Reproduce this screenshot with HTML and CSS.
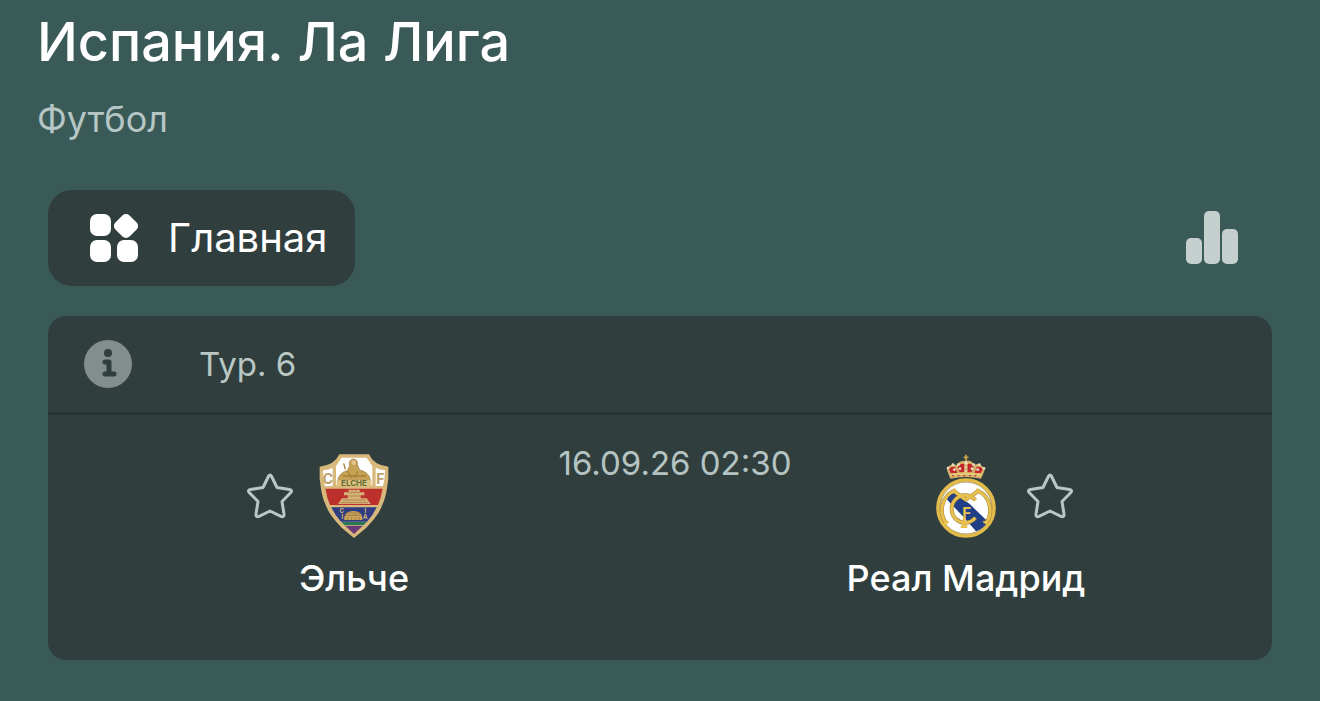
FILE: index.html
```html
<!DOCTYPE html>
<html lang="ru">
<head>
    <meta charset="UTF-8">
    <meta name="viewport" content="width=device-width, initial-scale=1.0">
    <title>Испания. Ла Лига</title>

    <link rel="stylesheet" href="styles.css">
</head>
<body>
    <header>
        <h1>Испания. Ла Лига</h1>
        <p class="sport">Футбол</p>
    </header>

    <nav>
        <button class="home-tab" type="button">
            <svg width="50" height="50" viewBox="0 0 50 50" fill="#fff" aria-hidden="true">
                <rect x="1" y="1" width="21" height="22" rx="7"/>
                <rect x="27" y="3" width="20" height="20" rx="5" transform="rotate(45 37 13)"/>
                <rect x="1" y="27" width="21" height="22" rx="7"/>
                <rect x="28" y="27" width="21" height="22" rx="7"/>
            </svg>
            Главная
        </button>
        <button class="stats" type="button" aria-label="Статистика">
            <svg width="52" height="54" viewBox="0 0 52 54" fill="#c4cfce">
                <rect x="0" y="27" width="16" height="26" rx="5"/>
                <rect x="18" y="0" width="16" height="53" rx="5"/>
                <rect x="36" y="18" width="16" height="35" rx="5"/>
            </svg>
        </button>
    </nav>

    <main class="card">
        <div class="round">
            <svg width="48" height="48" viewBox="0 0 48 48" aria-hidden="true">
                <circle cx="24" cy="24" r="24" fill="#828d8c"/>
                <circle cx="24" cy="13" r="4" fill="#303f3e"/>
                <path d="M21 22h4v12M21 34h9" fill="none" stroke="#303f3e" stroke-width="5" stroke-linecap="round" stroke-linejoin="round"/>
            </svg>
            <span>Тур. 6</span>
        </div>

        <div class="match">
            <section class="team home">
                <div class="badge-row">
                    <button class="star" type="button" aria-label="Добавить Эльче в избранное">
                        <svg width="48" height="48" viewBox="0 0 48 48">
                            <path d="M22.400 4.500Q24 1.500 25.600 4.500L31 15.500L43.500 17.500Q47 18.200 44.600 20.800L36 29.500L38 42Q38.200 45.600 35 44.300L24 39L13 44.300Q9.800 45.600 10 42L12 29.500L3.400 20.800Q1 18.200 4.500 17.500L17 15.500Z"/>
                        </svg>
                    </button>
                    <svg class="crest" width="70" height="84" viewBox="27 28 210 252" aria-hidden="true">
                        <path d="M88 29H177Q190 61 235 66V103C231 128 230 151 219 176C206 211 190 225 169 249L132 280L95 249C74 225 58 211 45 176C34 151 33 128 29 103V66Q74 61 88 29Z" fill="#d8b87b"/>
                        <path d="M94 39H170L187 65V122H78V65Z" fill="#fff"/>
                        <path d="M39 77Q58 75 68 69V124H45Q39 101 39 77ZM197 69Q209 75 225 77Q225 101 219 124H197Z" fill="#fff"/>
                        <path d="M46 132H218Q213 160 204 181H60Q51 160 46 132Z" fill="#be302c"/>
                        <path d="M64 188H200Q190 210 171 231H93Q74 210 64 188Z" fill="#303c82"/>
                        <path d="M94 232H170L160 242H104Z" fill="#297858"/>
                        <path d="M106 244H158L132 268Z" fill="#6c3877"/>
                        <!-- figure over the name -->
                        <path d="M84 105Q88 84 112 78L119 64Q114 45 130 43Q145 45 142 61L149 76Q176 82 181 105Z" fill="#c7a255" stroke="#987637" stroke-width="2"/>
                        <path d="M101 56L106 74M112 80L126 100M144 80L134 100M97 94H168" fill="none" stroke="#a4833f" stroke-width="4"/>
                        <circle cx="131" cy="54" r="7" fill="#e3c18a"/>
                        <path d="M80 105H184V125H80Z" fill="#dfc181"/>
                        <!-- tower -->
                        <path d="M116 135H149V143H163V152H152V161H170L182 178H84L96 161H113V152H102V143H116Z" fill="#d5b479"/>
                        <path d="M116 144H149M113 154H152M98 166H168M92 174H174M126 136V141M137 136V141" stroke="#a8673a" stroke-width="2"/>
                        <!-- bridge -->
                        <path d="M103 218Q105 200 130 199Q155 200 157 218V226H103Z" fill="#cba45a"/>
                        <path d="M110 205H150M105 212H155M114 218V226M125 218V226M136 218V226M147 218V226" stroke="#8b6c3e" stroke-width="2"/>
                        <text class="elche-name" x="132" y="123" text-anchor="middle">ELCHE</text>
                        <text class="crest-letter" x="54" y="118" text-anchor="middle">C</text>
                        <text class="crest-letter" x="211" y="118" text-anchor="middle">F</text>
                        <text class="crest-mark" x="95" y="205" text-anchor="middle">C</text>
                        <text class="crest-mark" x="97" y="222" text-anchor="middle">I</text>
                        <text class="crest-mark" x="166" y="205" text-anchor="middle">I</text>
                        <text class="crest-mark" x="166" y="222" text-anchor="middle">A</text>
                    </svg>
                </div>
                <h2>Эльче</h2>
            </section>

            <time datetime="2026-09-16T02:30">16.09.26 02:30</time>

            <section class="team away">
                <div class="badge-row">
                    <svg class="crest" width="62" height="84" viewBox="45 27 186 252" aria-hidden="true">
                        <!-- crown -->
                        <path d="M91 101L83 81Q77 68 88 62Q98 54 110 60Q121 45 137 48Q153 43 163 60Q176 53 187 64Q199 70 191 83L183 101Q137 91 91 101Z" fill="#d3b06a"/>
                        <path d="M92 84L87 72Q93 64 105 66L112 84ZM119 82L113 66Q121 54 133 57L132 82ZM143 82V57Q155 53 161 66L154 82ZM164 84L170 66Q183 62 188 73L182 84Z" fill="#c3262b"/>
                        <path d="M138 29V49M131 37H145" stroke="#caa24c" stroke-width="5"/>
                        <g fill="#eee1c5">
                            <circle cx="84" cy="69" r="4"/><circle cx="99" cy="59" r="4"/><circle cx="115" cy="59" r="4"/>
                            <circle cx="138" cy="54" r="5"/><circle cx="161" cy="59" r="4"/><circle cx="178" cy="59" r="4"/><circle cx="192" cy="70" r="4"/>
                            <circle cx="103" cy="74" r="4"/><circle cx="120" cy="71" r="4"/><circle cx="137" cy="67" r="3"/>
                            <circle cx="137" cy="77" r="3"/><circle cx="156" cy="71" r="4"/><circle cx="173" cy="74" r="4"/>
                        </g>
                        <path d="M92 91Q137 81 184 91" fill="none" stroke="#e7ca76" stroke-width="7"/>
                        <path d="M96 92H181" stroke="#b43432" stroke-width="4" stroke-dasharray="5 12"/>
                        <!-- round shield -->
                        <circle cx="138" cy="189" r="84" fill="#fff" stroke="#e2bb49" stroke-width="11"/>
                        <path d="M82 147Q90 138 104 143L150 178L204 230Q190 252 168 259L130 215L82 165Z" fill="#203f86"/>
                        <circle cx="138" cy="189" r="78" fill="none" stroke="#967a3d" stroke-width="2"/>
                        <g fill="none" stroke="#a38238" stroke-width="12">
                            <path d="M166 166A40 41 0 1 0 166 218"/>
                            <path d="M79 236Q61 212 67 182Q74 150 101 138L137 164L175 138Q202 150 209 182Q215 212 197 236"/>
                        </g>
                        <g fill="none" stroke="#e7c04e" stroke-width="9">
                            <path d="M166 166A40 41 0 1 0 166 218"/>
                            <path d="M79 236Q61 212 67 182Q74 150 101 138L137 164L175 138Q202 150 209 182Q215 212 197 236"/>
                            <path d="M72 238L86 229M190 229L204 238M95 145L106 131M170 131L181 145" stroke-width="6"/>
                        </g>
                        <text class="madrid-letter" x="140" y="222" text-anchor="middle">F</text>
                        <path d="M132 220V246M122 245H142" stroke="#e7c04e" stroke-width="8"/>
                    </svg>
                    <button class="star" type="button" aria-label="Добавить Реал Мадрид в избранное">
                        <svg width="48" height="48" viewBox="0 0 48 48">
                            <path d="M22.400 4.500Q24 1.500 25.600 4.500L31 15.500L43.500 17.500Q47 18.200 44.600 20.800L36 29.500L38 42Q38.200 45.600 35 44.300L24 39L13 44.300Q9.800 45.600 10 42L12 29.500L3.400 20.800Q1 18.200 4.500 17.500L17 15.500Z"/>
                        </svg>
                    </button>
                </div>
                <h2>Реал Мадрид</h2>
            </section>
        </div>
    </main>
</body>
</html>
```
FILE: styles.css
```css
* {
    box-sizing: border-box;
}

body {
    background-color: #3a5a58;
    color: #ffffff;
    font-family: Inter, "Liberation Sans", sans-serif;
    margin: 0;
    padding: 8px 48px 40px;
}

header {
    margin: 0 -11px;
}

h1 {
    font-size: 54px;
    font-weight: 500;
    line-height: 68px;
    margin: 0;
}

.sport {
    color: #b5c6c4;
    font-size: 36px;
    line-height: 44px;
    margin: 21px 0 49px;
}

button {
    background: none;
    border: none;
    color: inherit;
    cursor: pointer;
    font-family: inherit;
    padding: 0;
}

svg {
    display: block;
}

nav {
    display: flex;
    align-items: center;
    justify-content: space-between;
    margin-bottom: 30px;
    padding-right: 34px;
}

.home-tab {
    background-color: #303f3e;
    border-radius: 24px;
    display: flex;
    align-items: center;
    gap: 29px;
    font-size: 40px;
    line-height: 50px;
    padding: 23px 27px 23px 41px;
}

.card {
    background-color: #303f3e;
    border-radius: 18px;
}

.round {
    border-bottom: 3px solid #273433;
    color: #b9c7c5;
    display: flex;
    align-items: center;
    gap: 67px;
    font-size: 33px;
    line-height: 48px;
    padding: 24px 36px;
}

.match {
    display: grid;
    grid-template-columns: 1fr 1fr;
    padding: 39px 0 60px;
}

.team {
    grid-row: 1;
    text-align: center;
}

.home {
    grid-column: 1;
}

.away {
    grid-column: 2;
}

.badge-row {
    display: grid;
    grid-template-columns: 1fr auto 1fr;
    align-items: center;
}

.crest {
    grid-column: 2;
}

.home .star {
    justify-self: end;
    margin-right: 25px;
}

.away .star {
    justify-self: start;
    margin-left: 29px;
}

.star path {
    fill: none;
    stroke: #b9c7c5;
    stroke-width: 3;
    stroke-linejoin: round;
}

h2 {
    font-size: 36px;
    font-weight: 500;
    line-height: 44px;
    margin: 18px 0 0;
}

/* kick-off time sits between the two teams */
time {
    grid-area: 1 / 1 / 2 / 3;
    justify-self: center;
    align-self: start;
    color: #b5c4c2;
    font-size: 33px;
    line-height: 18px;
    padding-left: 30px;
}

.elche-name {
    fill: #626f35;
    font-size: 24px;
    font-weight: 700;
}

.crest-letter {
    fill: #c0a06a;
    font-size: 42px;
    font-weight: 700;
}

.crest-mark {
    fill: #d8b87b;
    font-size: 18px;
    font-weight: 700;
}

.madrid-letter {
    fill: #e7c04e;
    font-size: 46px;
    font-weight: 700;
}
```
